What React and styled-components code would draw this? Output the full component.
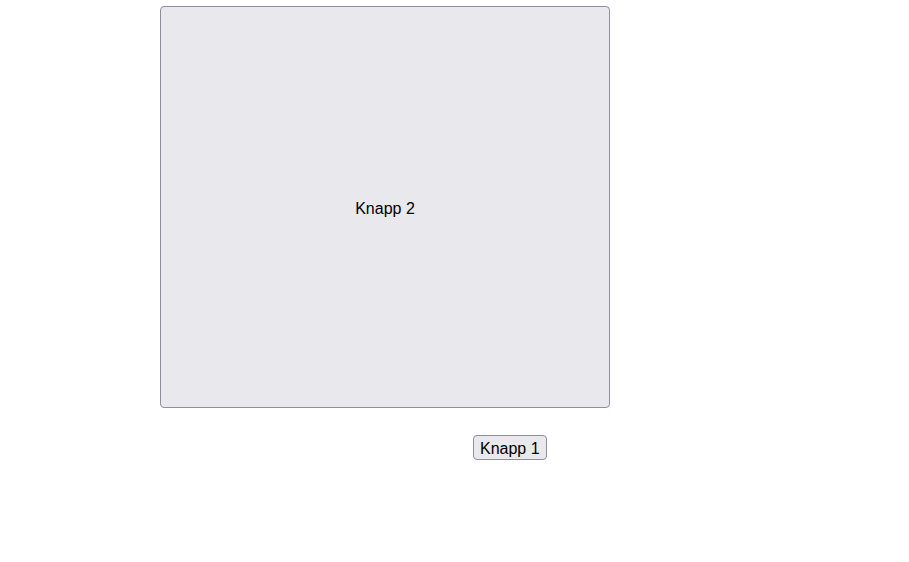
import React from "react";
import styled, { createGlobalStyle } from "styled-components";

const Global = createGlobalStyle`
  html, body { margin: 0; padding: 0; background: #ffffff; }
  body { font-family: "Liberation Sans", Arial, sans-serif; }
`;

const Page = styled.div`
  display: flex;
  flex-direction: column;
  align-items: flex-start;
  gap: 27px;
  padding: 6px 0 0 160px;
`;

const Button = styled.button`
  box-sizing: border-box;
  font-family: "Liberation Sans", Arial, sans-serif;
  font-size: 16px;
  color: #000;
  background: #e9e8ed;
  border: 1px solid #8f8e9e;
  border-radius: 4px;
  padding: ${(p) => (p.$big ? "3px 0 0" : "2px 6px 0")};
  width: ${(p) => (p.$big ? "450px" : "auto")};
  height: ${(p) => (p.$big ? "402px" : "25px")};
  line-height: 18px;
  display: flex;
  align-items: center;
  justify-content: center;
  cursor: pointer;
`;

const Row = styled.div`
  padding-left: 313px;
`;

export default function App() {
  return (
    <>
      <Global />
      <Page>
        <Button $big>Knapp 2</Button>
        <Row>
          <Button>Knapp 1</Button>
        </Row>
      </Page>
    </>
  );
}
